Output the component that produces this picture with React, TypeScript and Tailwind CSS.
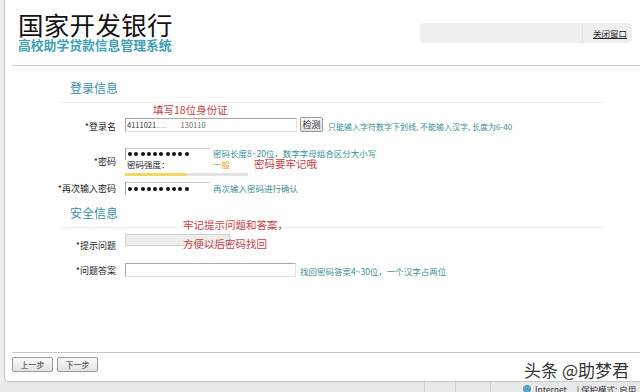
const teal = "text-[#3a8f94]";

function Label({ children }: { children: string }) {
  return <div className="w-[111px] shrink-0 text-right text-[9px] leading-[11px] text-[#222]">{children}</div>;
}

function Dots({ count }: { count: number }) {
  return (
    <div className="flex items-center gap-[2.3px]">
      {Array.from({ length: count }, (_, i) => (
        <span key={i} className="h-[4px] w-[4px] rounded-full bg-[#111]" />
      ))}
    </div>
  );
}

function Btn({ children, className = "" }: { children: string; className?: string }) {
  return (
    <div
      className={`flex items-center justify-center rounded-[2px] border border-[#9a9a9a] bg-gradient-to-b from-[#fbfbfb] to-[#e2e2e2] text-[8px] leading-none text-[#333] ${className}`}
    >
      {children}
    </div>
  );
}

export default function App() {
  return (
    <div className="flex h-[392px] w-[640px] flex-col overflow-hidden bg-[#eceeee] font-['Noto_Sans_CJK_SC','Noto_Sans',sans-serif] text-[#222]">
      <div className="ml-[4px] flex min-h-0 flex-1 flex-col rounded-bl-[5px] border-b border-l border-[#c6c9c9] bg-white">
        {/* header */}
        <div className="flex h-[65px] shrink-0 items-start justify-between">
          <div className="pl-[13px] pt-[10px]">
            <div className="text-[25.5px] leading-[27px] tracking-[0.3px] text-[#111]">国家开发银行</div>
            <div className="mt-[1px] text-[12.8px] font-bold leading-[14px] text-[#3e9fb4]">高校助学贷款信息管理系统</div>
          </div>
          <div className="mr-[8px] mt-[23px] flex h-[20px] w-[212px] items-center rounded-[4px] bg-[#eef0ef]">
            <div className="flex-1" />
            <div className="h-full w-px bg-[#e2e4e4]" />
            <span className="ml-[10px] mr-[5px] text-[8.5px] leading-none text-[#222] underline">关闭窗口</span>
          </div>
        </div>
        <div className="ml-[7px] h-px shrink-0 bg-[#cacccc]" />

        {/* 登录信息 */}
        <div className="flex h-[36px] shrink-0 items-end pb-[7px] pl-[65px]">
          <span className="text-[12px] leading-[14px] text-[#3a8fa0]">登录信息</span>
        </div>
        <div className="ml-[55px] mr-[35px] h-px shrink-0 bg-[#eeeeee]" />
        <div className="flex h-[14px] shrink-0 items-center pl-[148px]">
          <span className="text-[10.5px] leading-none text-[#c53f45]">填写18位身份证</span>
        </div>

        {/* 登录名 */}
        <div className="flex h-[15px] shrink-0 items-end">
          <Label>*登录名</Label>
          <div className="ml-[9px] flex h-[14px] w-[172px] items-center border border-[#a9a9a9] border-b-[#e2e2e2] border-r-[#e2e2e2] pl-[1px] text-[7.5px] leading-none text-[#333]">
            4111021<span className="text-[#aaa]">.....</span>
            <span className="ml-[14px] text-[#666]">130110</span>
          </div>
          <Btn className="ml-[3px] h-[15px] w-[23px] text-[9px]">检测</Btn>
          <span className={`ml-[5px] text-[8px] leading-[11px] ${teal}`}>
            只能输入字符数字下划线, 不能输入汉字, 长度为6-40
          </span>
        </div>

        {/* 密码 */}
        <div className="mt-[16px] flex h-[27px] shrink-0 items-center">
          <Label>*密码</Label>
          <div className="ml-[9px] flex flex-col">
            <div className="flex h-[12px] items-center">
              <div className="flex h-[12px] w-[85px] items-center border-l border-t border-[#9a9a9a] border-t-[#c8c8c8] pl-[2px]">
                <Dots count={10} />
              </div>
              <span className={`ml-[3px] text-[8.5px] leading-none ${teal}`}>
                密码长度8~20位，数字字母组合区分大小写
              </span>
            </div>
            <div className="flex h-[10px] items-center">
              <span className="w-[88px] pl-[2px] text-[8.5px] leading-none text-[#222]">密码强度：</span>
              <span className="text-[8.5px] leading-none text-[#e0a21e]">一般</span>
              <span className="ml-[24px] text-[10.5px] leading-none text-[#c53f45]">密码要牢记哦</span>
            </div>
            <div className="mt-[3px] flex h-[3px] w-[123px] bg-[#e3e3e3]">
              <div className="h-full w-[62px] bg-[#f0d862]" />
            </div>
          </div>
        </div>

        {/* 再次输入密码 */}
        <div className="mt-[6px] flex h-[14px] shrink-0 items-center">
          <Label>*再次输入密码</Label>
          <div className="ml-[9px] flex h-[13px] w-[85px] items-center border-l border-t border-[#9a9a9a] border-t-[#c8c8c8] pl-[2px]">
            <Dots count={10} />
          </div>
          <span className={`ml-[3px] text-[8.5px] leading-none ${teal}`}>再次输入密码进行确认</span>
        </div>

        {/* 安全信息 */}
        <div className="relative shrink-0">
          <div className="flex h-[32px] items-end pb-[7px] pl-[65px]">
            <span className="text-[12px] leading-[14px] text-[#3a8fa0]">安全信息</span>
          </div>
          <div className="ml-[55px] mr-[35px] h-px bg-[#eeeeee]" />

          <div className="mt-[6px] flex h-[18px] items-start">
            <div className="pt-[6px]">
              <Label>*提示问题</Label>
            </div>
            <div className="ml-[9px] h-[12px] w-[105px] border border-[#cfcfcf] bg-[#ededed]" />
          </div>

          <div className="mt-[10px] flex h-[15px] items-center">
            <div className="pt-[1px]">
              <Label>*问题答案</Label>
            </div>
            <div className="ml-[9px] h-[14px] w-[171px] border border-[#a9a9a9] border-b-[#e2e2e2] border-r-[#e2e2e2]" />
            <span className={`ml-[4px] mt-[3px] text-[8.5px] leading-none ${teal}`}>
              找回密码答案4~30位，一个汉字占两位
            </span>
          </div>

          {/* annotations */}
          <div className="absolute left-[178px] top-[20px] text-[10.5px] leading-[19px] text-[#c53f45]">
            <div>牢记提示问题和答案，</div>
            <div>方便以后密码找回</div>
          </div>
        </div>

        <div className="flex-1" />
        <div className="ml-[7px] h-px shrink-0 bg-[#c4c6c6]" />
        <div className="flex h-[28px] shrink-0 items-start justify-between pl-[7px] pt-[4px]">
          <div className="flex gap-[4px]">
            <Btn className="h-[15px] w-[41px]">上一步</Btn>
            <Btn className="h-[15px] w-[41px]">下一步</Btn>
          </div>
          <span className="mr-[11px] mt-[3px] text-[17px] leading-[20px] text-[#333]">头条 @助梦君</span>
        </div>
      </div>

      {/* status bar */}
      <div className="flex h-[10px] shrink-0 items-start bg-[#e7e9e9] text-[8.5px] leading-none text-[#333]">
        <div className="ml-[424px] h-full w-px bg-[#cfd1d1]" />
        <div className="ml-[30px] h-full w-px bg-[#cfd1d1]" />
        <div className="ml-[34px] h-full w-px bg-[#cfd1d1]" />
        <div className="ml-[32px] mt-[3px] flex items-center gap-[4px]">
          <span className="h-[8px] w-[8px] rounded-full bg-[#5c9fc4]" />
          <span>Internet</span>
          <span className="ml-[6px]">| 保护模式: 启用</span>
        </div>
      </div>
    </div>
  );
}
